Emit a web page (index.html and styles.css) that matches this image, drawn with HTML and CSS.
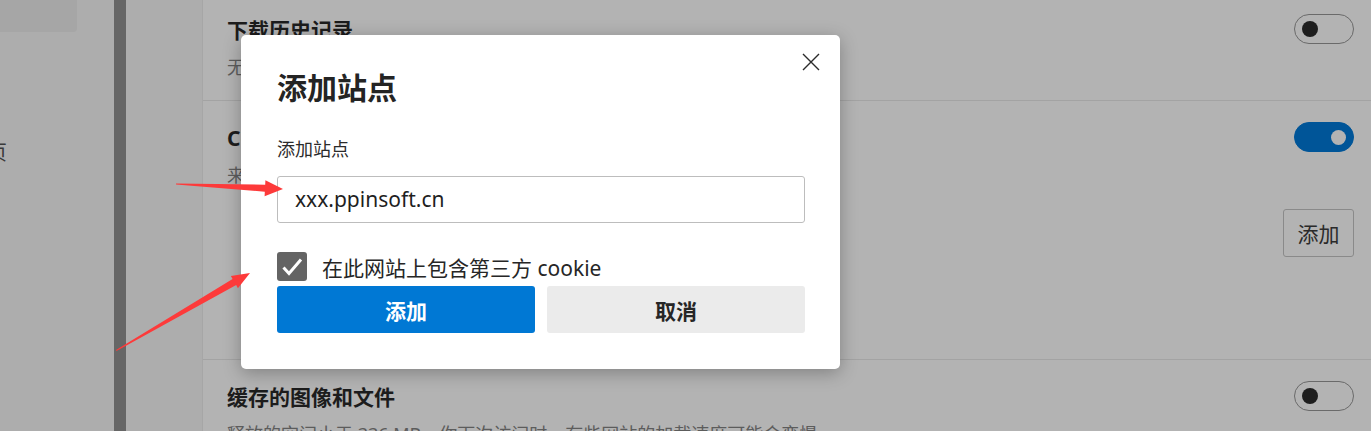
FILE: index.html
```html
<!DOCTYPE html>
<html lang="zh-CN">

<head>
    <meta charset="UTF-8">
    <meta name="viewport" content="width=device-width, initial-scale=1.0">
    <title>添加站点</title>

    <link rel="stylesheet" href="styles.css">
</head>

<body>
    <div class="page">
        <div class="sidebar">
            <div class="side-tile"></div>
            <div class="side-item">主页</div>
        </div>
        <div class="side-bar"></div>
        <div class="side-gap"></div>

        <div class="content">
            <div class="list">
                <div class="row row-first">
                    <div class="row-head">
                        <div class="row-title">下载历史记录</div>
                        <div class="toggle"><span class="knob"></span></div>
                    </div>
                    <div class="row-sub">无</div>
                </div>

                <div class="row row-cookie">
                    <div class="row-head">
                        <div class="row-title">Cookie 和其他站点数据</div>
                        <div class="toggle on"><span class="knob"></span></div>
                    </div>
                    <div class="row-sub">来自 1 个站点</div>
                    <div class="row-action">
                        <button class="btn-outline">添加</button>
                    </div>
                </div>

                <div class="row">
                    <div class="row-head">
                        <div class="row-title">缓存的图像和文件</div>
                        <div class="toggle"><span class="knob"></span></div>
                    </div>
                    <div class="row-sub">释放的空间小于 336 MB。你下次访问时，有些网站的加载速度可能会变慢。</div>
                </div>
            </div>
        </div>
    </div>

    <div class="dialog">
        <div class="dialog-head">
            <div class="dialog-title">添加站点</div>
            <div class="close">
                <svg width="18" height="18" viewBox="0 0 18 18">
                    <path d="M1 1 L17 17 M17 1 L1 17" stroke="#2b2b2b" stroke-width="1.4" fill="none" />
                </svg>
            </div>
        </div>
        <div class="field-label">添加站点</div>
        <div class="field">xxx.ppinsoft.cn</div>
        <div class="check-row">
            <div class="check">
                <svg width="30" height="29" viewBox="0 0 30 29">
                    <path d="M6.5 15.5 L12 21.5 L24 7.5" stroke="#fff" stroke-width="3" fill="none" />
                </svg>
            </div>
            <div class="check-label">在此网站上包含第三方 cookie</div>
        </div>
        <div class="dialog-btns">
            <button class="btn btn-primary">添加</button>
            <button class="btn btn-cancel">取消</button>
        </div>
    </div>

    <svg class="marks" width="1371" height="431" viewBox="0 0 1371 431">
        <polygon points="176,183.5 265.2,184.7 265.4,180.2 283,189 264.6,196.2 264.8,191.7 176,184.5" fill="#fd3a3a" />
        <polygon points="116,350 232.6,279.1 230.9,276 250,273 237.9,288.2 236.2,285.1 116.5,351" fill="#fd3a3a" />
    </svg>
</body>

</html>
```

FILE: styles.css
```css
* {
    box-sizing: border-box;
}

body {
    margin: 0;
    width: 1371px;
    height: 431px;
    overflow: hidden;
    position: relative;
    font-family: "Noto Sans", "Noto Sans CJK SC", sans-serif;
    background-color: #adadad;
}

.page {
    display: flex;
    height: 431px;
}

.sidebar {
    width: 114px;
    overflow: hidden;
}

.side-tile {
    width: 77px;
    height: 32px;
    background-color: #a6a6a6;
    border-bottom-right-radius: 4px;
}

.side-item {
    margin-top: 107px;
    margin-left: -33px;
    font-size: 20px;
    line-height: 28px;
    color: #3a3a3a;
    white-space: nowrap;
}

.side-bar {
    width: 12px;
    background-color: #666666;
}

.side-gap {
    width: 76px;
}

.content {
    flex: 1;
    background-color: #b3b3b3;
    border-left: 1px solid #a6a6a6;
    overflow: hidden;
}

.list {
    margin-top: -7px;
}

.row {
    padding: 21px 17px 0 24px;
    border-bottom: 1px solid #a3a3a3;
}

.row-first {
    height: 108px;
}

.row-cookie {
    height: 259px;
}

.row-head {
    display: flex;
    justify-content: space-between;
    align-items: center;
    height: 30px;
}

.row-title {
    font-size: 21px;
    font-weight: 700;
    color: #1c1c1c;
    white-space: nowrap;
}

.row-sub {
    margin-top: 10px;
    font-size: 18px;
    line-height: 26px;
    color: #5c5c5c;
    white-space: nowrap;
}

.toggle {
    width: 60px;
    height: 30px;
    border: 1px solid #6a6a6a;
    border-radius: 15px;
    display: flex;
    align-items: center;
    padding-left: 7px;
}

.knob {
    width: 16px;
    height: 16px;
    border-radius: 50%;
    background-color: #1e1e1e;
}

.toggle.on {
    background-color: #005598;
    border-color: #005598;
    justify-content: flex-end;
    padding-right: 7px;
}

.toggle.on .knob {
    width: 15px;
    height: 15px;
    background-color: #b3b3b3;
}

.row-action {
    margin-top: 21px;
    display: flex;
    justify-content: flex-end;
}

.btn-outline {
    width: 71px;
    height: 48px;
    border: 1px solid #8a8a8a;
    border-radius: 3px;
    background: transparent;
    font-family: "Noto Sans", "Noto Sans CJK SC", sans-serif;
    font-size: 21px;
    color: #2a2a2a;
    padding: 0;
}

/* 弹窗 */
.dialog {
    position: absolute;
    left: 241px;
    top: 35px;
    width: 599px;
    height: 334px;
    background-color: #ffffff;
    border-radius: 5px;
    box-shadow: 0 4px 18px rgba(0, 0, 0, 0.28);
    padding: 18px 35px 0 36px;
    z-index: 10;
}

.dialog-head {
    display: flex;
    justify-content: space-between;
    align-items: flex-start;
}

.dialog-title {
    margin-top: 15px;
    font-size: 30px;
    line-height: 40px;
    font-weight: 700;
    color: #242424;
}

.close {
    width: 18px;
    height: 18px;
    margin-right: -15px;
}

.close svg {
    display: block;
}

.field-label {
    margin-top: 29px;
    font-size: 18px;
    line-height: 24px;
    color: #2b2b2b;
}

.field {
    margin-top: 15px;
    height: 47px;
    border: 1px solid #bdbdbd;
    border-radius: 3px;
    padding-left: 17px;
    font-size: 21px;
    line-height: 45px;
    color: #1f1f1f;
}

.check-row {
    margin-top: 29px;
    display: flex;
    align-items: center;
    height: 29px;
}

.check {
    width: 30px;
    height: 29px;
    border-radius: 3px;
    background-color: #646464;
}

.check svg {
    display: block;
}

.check-label {
    margin-left: 15px;
    font-size: 21px;
    color: #262626;
    white-space: nowrap;
}

.dialog-btns {
    margin-top: 5px;
    display: flex;
    gap: 12px;
}

.btn {
    width: 258px;
    height: 47px;
    border: none;
    border-radius: 3px;
    font-family: "Noto Sans", "Noto Sans CJK SC", sans-serif;
    font-size: 21px;
    font-weight: 700;
    padding: 0;
}

.btn-primary {
    background-color: #0078d4;
    color: #ffffff;
}

.btn-cancel {
    background-color: #ebebeb;
    color: #262626;
}

.marks {
    position: absolute;
    left: 0;
    top: 0;
    z-index: 20;
    pointer-events: none;
}
```
